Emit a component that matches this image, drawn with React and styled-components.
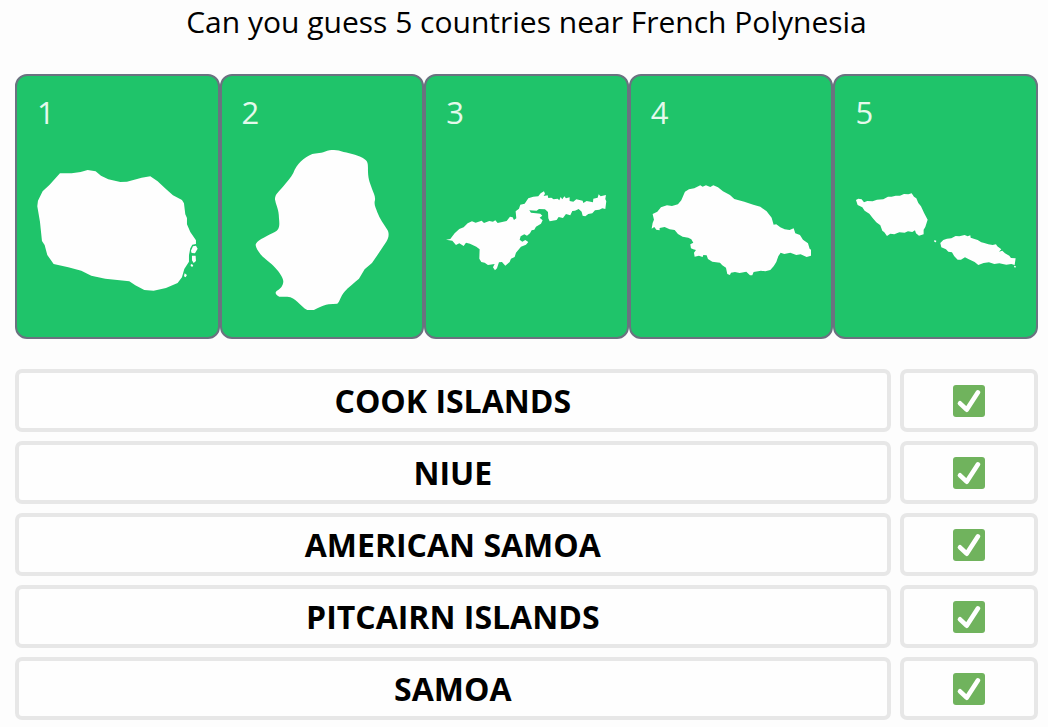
import React from "react";
import styled, { createGlobalStyle } from "styled-components";

const GlobalStyle = createGlobalStyle`
*{
box-sizing:border-box;
}
body{
margin:0;
background-color:#fdfdfd;
color:#000;
font-family:"Segoe UI", "Open Sans", "Noto Sans", sans-serif;
}
`

const Page = styled.main`
display:flex;
flex-direction:column;
padding:0 10px 7px 15px;
`

const Title = styled.h1`
margin:0 0 30px;
font-size:30px;
font-weight:400;
line-height:44px;
text-align:center;
`

const Cards = styled.ol`
display:grid;
grid-template-columns:repeat(5, 1fr);
margin:0 0 30px;
padding:0;
list-style:none;
`

const Card = styled.li`
display:flex;
flex-direction:column;
gap:16px;
padding:14px 20px 27px;
border:2px solid #6b7280;
border-radius:12px;
background-color:#1fc46a;
`

const CardNumber = styled.span`
color:#e4f9ec;
font-size:31px;
font-weight:500;
line-height:44px;
`

const Shape = styled.svg`
display:block;
width:100%;
height:160px;
fill:#fefefe;
`

const Guesses = styled.ul`
display:flex;
flex-direction:column;
gap:9px;
margin:0;
padding:0;
list-style:none;
`

const Guess = styled.li`
display:grid;
grid-template-columns:repeat(7, 1fr);
gap:9px;
`

const Cell = styled.div`
display:flex;
align-items:center;
justify-content:center;
grid-column:span ${({ $span }) => $span};
height:63px;
border:4px solid #e7e7e7;
border-radius:7px;
background-color:#fefefe;
font-size:32px;
font-weight:700;
text-transform:uppercase;
`

const CheckIcon = styled.svg`
display:block;
width:32px;
height:32px;
`

const shapes = [
    {
        box: "81 255 480 480",
        path: "M149 325L184 325L211 321L232 315L256 319L272 332L294 343L330 351L350 350L394 338L420 334L442 349L466 371L488 391L515 405L521 415L525 448L530 459L530 478L540 501L557 526L557 537L546 539L540 550L536 571L536 590L522 612L515 637L502 654L467 669L430 677L402 675L375 661L357 649L285 641L243 632L213 617L174 607L130 597L111 570L103 540L95 528L89 470L81 424L83 407L97 379L118 359ZM548 544L557 542L562 551L554 565L544 564L542 557ZM545 572L556 572L557 588L550 594L545 586ZM542 597L549 600L546 606L541 603ZM523 625L530 630L526 637L521 634Z",
    },
    {
        box: "80 255 480 480",
        path: "M290 267C302 263 319 265 335 257C350 253 367 255 384 261C406 266 431 270 449 284C458 291 457 300 457 319C458 347 464 356 469 371C473 383 480 393 478 406C474 419 481 428 485 442C493 463 503 475 515 494C522 505 519 519 512 530L491 562L469 594L447 613L430 641C417 653 397 667 386 681C374 695 373 710 365 716L339 718C313 723 303 733 287 738C271 738 258 722 245 710C237 703 229 696 215 695L191 695C179 690 177 681 184 677C195 673 203 661 203 649C203 637 188 617 173 602C159 588 142 578 134 567C127 557 117 544 121 536C129 524 157 512 176 502C193 494 192 480 190 459C190 433 182 423 179 407C174 391 190 379 202 365C213 351 227 337 233 324C243 298 264 277 290 267Z",
    },
    {
        box: "65 -60 480 480",
        path: "M64 209L77 207L90 190L104 177L117 172L129 160L142 154L153 158L171 152L178 159L194 153L205 155L212 151L219 159L246 153L256 140L264 142L268 150L275 145L273 124L283 116L287 104L300 101L311 85L326 80L341 79L348 70L358 64L361 71L357 78L369 76L371 84L380 83L387 88L399 86L404 91L408 81L413 88L419 79L424 85L435 82L435 93L446 95L455 88L474 92L476 99L486 93L505 97L506 86L519 83L522 73L528 79L544 75L542 87L545 94L542 117L533 115L524 119L511 121L503 130L491 132L482 139L474 137L471 125L462 117L451 122L443 123L437 136L424 132L415 144L402 141L396 150L375 154L371 145L370 126L361 118L343 117L336 122L314 121L319 128L334 130L347 131L353 137L345 143L354 151L349 161L334 170L329 179L321 181L316 190L307 197L299 193L288 199L285 209L293 215L302 210L311 216L304 224L289 230L274 248L270 261L259 266L255 276L242 287L232 276L223 277L217 295L211 301L205 292L210 282L190 285L180 278L170 276L164 266L165 238L155 230L136 221L124 218L117 228L104 220L94 225L83 212Z",
    },
    {
        box: "63 -45 480 480",
        path: "M153 106L164 80L176 73L192 70L210 61L217 65L227 61L240 66L249 61L263 67L278 79L299 90L312 102L342 110L369 119L390 125L409 139L424 158L430 179L438 178L450 187L463 193L478 195L490 190L495 205L509 210L518 224L533 235L538 251L546 257L542 272L529 276L511 268L498 270L480 263L462 267L451 263L444 274L438 291L430 304L420 315L405 319L392 317L370 321L366 331L359 331L348 320L328 324L314 321L302 323L299 330L291 327L287 308L276 301L269 293L246 290L233 282L229 271L219 270L217 276L206 272L193 275L191 263L197 255L189 253L182 250L180 238L189 233L183 223L174 218L157 215L143 207L133 195L118 193L103 186L88 189L88 196L78 194L72 186L64 191L67 174L71 164L67 147L81 140L92 127L110 121L125 123L143 118Z",
    },
    {
        box: "61 -60 480 480",
        path: "M63 90L70 86L80 88L87 97L97 93L113 94L126 89L145 88L159 80L170 80L182 77L195 77L207 72L220 73L230 70L237 80L244 85L250 99L258 109L267 128L278 149L271 171L266 179L266 193L252 197L243 190L240 181L232 186L219 184L209 188L193 187L178 193L166 191L156 198L148 187L142 182L136 166L124 157L113 144L103 131L89 122L82 112L68 105ZM298 210L304 212L303 217L298 216ZM316 219L325 210L336 206L349 205L362 198L373 199L389 195L398 199L406 196L407 203L428 210L439 217L448 219L460 223L473 225L483 223L487 229L499 238L492 245L502 242L510 250L523 257L528 264L542 265L539 285L529 282L514 284L493 280L478 282L462 277L446 279L430 285L419 276L400 267L390 262L378 269L368 269L358 259L351 247L340 245L333 238L319 232ZM538 287L543 289L541 293L537 291Z",
    },
]

const guesses = ["Cook Islands", "Niue", "American Samoa", "Pitcairn Islands", "Samoa"]

const Check = () => (
    <CheckIcon viewBox="0 0 96 96" role="img" aria-label="Correct">
        <rect width="96" height="96" rx="9" fill="#70b35d" />
        <path d="M21 55L41 74L75 22" fill="none" stroke="#fff" strokeWidth="14" strokeLinecap="round" strokeLinejoin="round" />
    </CheckIcon>
)

const App = () => {
    return (
<>
<GlobalStyle />
<Page>
    <Title>Can you guess 5 countries near French Polynesia</Title>
    <Cards>
        {shapes.map((shape, i) => (
            <Card key={shape.path}>
                <CardNumber>{i + 1}</CardNumber>
                <Shape viewBox={shape.box} aria-hidden="true">
                    <path d={shape.path} />
                </Shape>
            </Card>
        ))}
    </Cards>
    <Guesses>
        {guesses.map((name) => (
            <Guess key={name}>
                <Cell $span={6}>{name}</Cell>
                <Cell $span={1}><Check /></Cell>
            </Guess>
        ))}
    </Guesses>
</Page>
</>
    )
}

export default App
